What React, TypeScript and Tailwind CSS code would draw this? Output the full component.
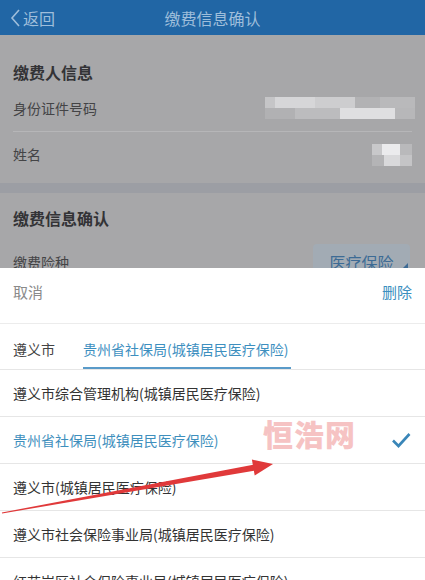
import React from "react";

const items = [
  { name: "遵义市综合管理机构(城镇居民医疗保险)", active: false },
  { name: "贵州省社保局(城镇居民医疗保险)", active: true },
  { name: "遵义市(城镇居民医疗保险)", active: false },
  { name: "遵义市社会保险事业局(城镇居民医疗保险)", active: false },
  { name: "红花岗区社会保险事业局(城镇居民医疗保险)", active: false },
];

function Mosaic({ blocks }: { blocks: { w: number; c: string }[][] }) {
  return (
    <div className="flex flex-col">
      {blocks.map((row, i) => (
        <div key={i} className="flex h-[11px]">
          {row.map((b, j) => (
            <div key={j} style={{ width: b.w, background: b.c }} />
          ))}
        </div>
      ))}
    </div>
  );
}

export default function App() {
  return (
    <div className="relative h-[580px] w-[425px] overflow-hidden bg-[#a7a7a9] font-['Noto_Sans_CJK_SC','Noto_Sans',sans-serif]">
      {/* Header */}
      <div className="relative flex h-[35px] items-center bg-[#2166a5] px-[10px]">
        <div className="flex items-center gap-[2px] text-[16px] text-[#9fbedb]">
          <svg width="11" height="20" viewBox="0 0 11 20" fill="none">
            <path d="M9 2L2 10l7 8" stroke="#9fbedb" strokeWidth="1.6" />
          </svg>
          <span>返回</span>
        </div>
        <div className="absolute inset-x-0 text-center text-[16px] text-[#9fbedb]">缴费信息确认</div>
      </div>

      {/* Payer info */}
      <div className="flex h-[148px] flex-col px-[13px] pt-[24px]">
        <div className="text-[16px] font-bold leading-[26px] text-[#333336]">缴费人信息</div>
        <div className="flex h-[47px] items-center justify-between border-b border-[#b6b6b8] text-[14px] text-[#444446]">
          <span>身份证件号码</span>
          <div className="mr-[-3px] opacity-90">
            <Mosaic
              blocks={[
                [
                  { w: 10, c: "#c9c9cb" },
                  { w: 40, c: "#dcdcde" },
                  { w: 40, c: "#d2d2d4" },
                  { w: 25, c: "#b4b4b6" },
                  { w: 35, c: "#bcbcbe" },
                ],
                [
                  { w: 30, c: "#b3b3b5" },
                  { w: 45, c: "#bfbfc1" },
                  { w: 55, c: "#e6e6e8" },
                  { w: 20, c: "#b9b9bb" },
                ],
              ]}
            />
          </div>
        </div>
        <div className="flex h-[45px] items-center justify-between text-[14px] text-[#444446]">
          <span>姓名</span>
          <Mosaic
            blocks={[
              [
                { w: 10, c: "#c8c8ca" },
                { w: 18, c: "#ebebed" },
                { w: 12, c: "#b9b9bb" },
              ],
              [
                { w: 12, c: "#b4b4b6" },
                { w: 16, c: "#d9d9db" },
                { w: 12, c: "#c4c4c6" },
              ],
            ]}
          />
        </div>
      </div>
      <div className="h-[10px] bg-[#9c9ea4]" />

      {/* Payment info */}
      <div className="flex flex-col px-[13px] pt-[12px]">
        <div className="text-[16px] font-bold leading-[26px] text-[#333336]">缴费信息确认</div>
        <div className="flex h-[55px] items-center justify-between pt-[7px] text-[14px] text-[#444446]">
          <span>缴费险种</span>
          <div className="relative mr-[2px] flex h-[36px] w-[97px] items-center justify-center rounded-[4px] bg-[#a2abb4] text-[16px] text-[#3d6b95]">
            医疗保险
            <svg className="absolute bottom-[9px] right-[2px]" width="8" height="8" viewBox="0 0 8 8">
              <path d="M8 0v8H0z" fill="#3d6b95" />
            </svg>
          </div>
        </div>
      </div>

      {/* Bottom sheet */}
      <div className="absolute inset-x-0 top-[268px] bottom-0 bg-white">
        <div className="flex h-[56px] items-center justify-between border-b border-[#ececec] px-[13px] pb-[6px] text-[15px]">
          <span className="text-[#8a8a8a]">取消</span>
          <span className="text-[#3b8fc0]">删除</span>
        </div>
        <div className="flex h-[46px] gap-[28px] border-b border-[#e6e6e6] px-[13px] text-[14px]">
          <div className="flex items-center border-b-2 border-transparent pt-[8px] text-[#444]">遵义市</div>
          <div className="flex items-center border-b-2 border-[#5a9bc9] pr-[3px] pt-[8px] text-[#3d8fbf]">
            贵州省社保局(城镇居民医疗保险)
          </div>
        </div>
        {items.map((it) => (
          <div
            key={it.name}
            className="flex h-[47px] items-center justify-between border-b border-[#e6e6e6] px-[13px] text-[14px]"
          >
            <span className={it.active ? "text-[#3e8fbd]" : "text-[#333]"}>{it.name}</span>
            {it.active && (
              <svg width="20" height="16" viewBox="0 0 20 16" fill="none" className="mr-[1px]">
                <path d="M2 8.5l5.5 5.5L18.5 2" stroke="#3a86b8" strokeWidth="2.6" />
              </svg>
            )}
          </div>
        ))}
      </div>

      {/* Watermark */}
      <div className="absolute left-[263px] top-[415px] text-[30px] font-black leading-[36px] tracking-[1px] text-[#f3b0b0] opacity-75">
        恒浩网
      </div>

      {/* Red arrow */}
      <svg className="absolute left-0 top-0" width="425" height="580" viewBox="0 0 425 580">
        <polygon points="1.9,512.5 254.5,464.5 255.5,470.5 2.1,513.5" fill="#e0393a" />
        <polygon points="273,464 251.9,459.6 254.7,475.4" fill="#e0393a" />
      </svg>
    </div>
  );
}
